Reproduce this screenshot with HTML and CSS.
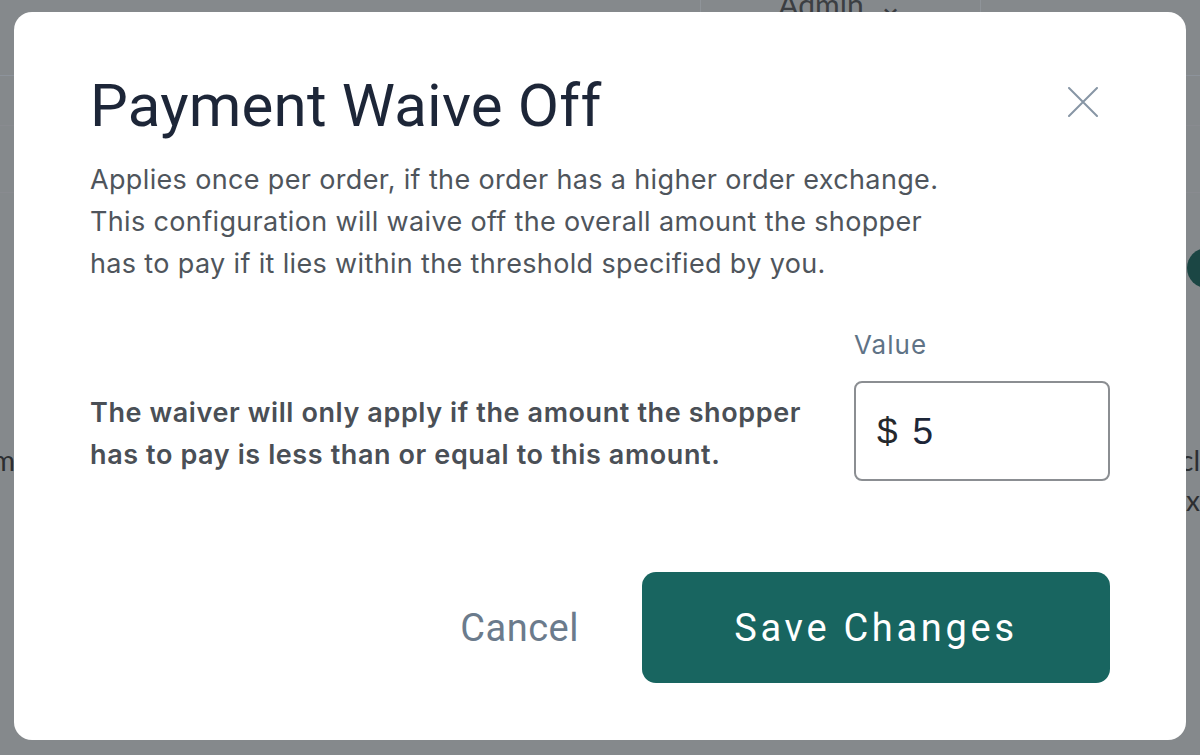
FILE: index.html
```html
<!DOCTYPE html>
<html lang="en">
<head>
<meta charset="utf-8">
<title>Payment Waive Off</title>
<link rel="stylesheet" href="styles.css">
</head>
<body>
<div class="page">
  <header class="topbar">
    <div class="topbar-spacer"></div>
    <div class="admin">Admin <span class="chev">&#8964;</span></div>
    <div class="topbar-end"></div>
  </header>
  <div class="band band-a"></div>
  <div class="band band-b"></div>
  <div class="avatar-row"><span class="avatar"></span></div>
  <div class="text-row">
    <span class="edge-left">Custom</span>
    <span class="edge-right">Excl<br>Tax</span>
  </div>
</div>

<div class="overlay">
  <div class="modal" role="dialog" aria-labelledby="modal-title">
    <div class="modal-head">
      <h1 class="title" id="modal-title">Payment Waive Off</h1>
      <button class="close" type="button" aria-label="Close">
        <svg viewBox="0 0 30 30" aria-hidden="true"><path d="M1 1 L29 29 M29 1 L1 29"/></svg>
      </button>
    </div>
    <p class="desc">Applies once per order, if the order has a higher order exchange.<br>This configuration will waive off the overall amount the shopper<br>has to pay if it lies within the threshold specified by you.</p>
    <div class="row">
      <p class="rule-text">The waiver will only apply if the amount the shopper<br>has to pay is less than or equal to this amount.</p>
      <div class="field">
        <label class="field-label" for="waive-value">Value</label>
        <div class="input"><span class="currency">$</span><span class="amount" id="waive-value">5</span></div>
      </div>
    </div>
    <div class="actions">
      <button class="cancel" type="button">Cancel</button>
      <button class="save" type="button">Save Changes</button>
    </div>
  </div>
</div>
</body>
</html>
```

FILE: styles.css
```css
* { box-sizing: border-box; }
html, body { margin: 0; height: 100%; }
body {
  background: #85898c;
  font-family: Inter, "Liberation Sans", sans-serif;
  overflow: hidden;
}

/* dimmed page behind the dialog */
.page {
  height: 100%;
  display: flex;
  flex-direction: column;
  transform: translateY(-24px);
}
.topbar {
  height: 100px;
  display: flex;
  border-bottom: 1px solid #8d939b;
  flex: none;
}
.topbar-spacer { width: 700px; }
.admin {
  width: 281px;
  border-left: 1px solid #8f9499;
  border-right: 1px solid #8f9499;
  display: flex;
  justify-content: center;
  gap: 14px;
  padding-top: 10px;
  font: 400 30px/36px Lato, sans-serif;
  color: #3b3e42;
}
.band { flex: none; border-bottom: 1px solid #898b90; }
.band-a { height: 50px; }
.band-b { height: 67px; }
.avatar-row {
  flex: none;
  height: 95px;
  display: flex;
  justify-content: flex-end;
  align-items: flex-end;
}
.avatar {
  width: 40px;
  height: 40px;
  border-radius: 50%;
  background: #1b4644;
  margin-right: -27px;
}
.text-row {
  flex: none;
  margin-top: 152px;
  display: flex;
  justify-content: space-between;
  font: 400 28px/40px Lato, sans-serif;
  color: #2c2e31;
}
.edge-left { margin-left: -80px; }
.edge-right { text-align: right; margin-right: 0; }

/* dialog */
.overlay {
  position: fixed;
  inset: 0;
  display: flex;
  justify-content: center;
  align-items: flex-start;
  padding-top: 12px;
}
.modal {
  width: 1172px;
  background: #fff;
  border-radius: 18px;
  padding: 58px 76px 57px;
  display: flex;
  flex-direction: column;
}
.modal-head {
  display: flex;
  justify-content: space-between;
  align-items: flex-start;
}
.title {
  margin: 0;
  font: 400 60px/72px Roboto, sans-serif;
  color: #1d2638;
  letter-spacing: 0.2px;
}
.close {
  width: 54px;
  height: 54px;
  margin-top: 5px;
  padding: 12px;
  border: 0;
  background: none;
}
.close svg { width: 30px; height: 30px; display: block; }
.close path { stroke: #8796a5; stroke-width: 2; fill: none; stroke-linecap: round; }

.desc {
  margin: 17px 0 5px;
  font: 400 27px/42px Inter, sans-serif;
  letter-spacing: 0.35px;
  color: #4f555c;
}
.row {
  margin-top: 39px;
  display: flex;
  justify-content: space-between;
  align-items: flex-end;
}
.rule-text {
  margin: 0 0 5px;
  font: 600 27px/42px Inter, sans-serif;
  letter-spacing: 0.6px;
  color: #4a4f56;
}
.field {
  width: 256px;
  display: flex;
  flex-direction: column;
  gap: 20px;
}
.field-label {
  font: 400 26px/32px Inter, sans-serif;
  letter-spacing: 1px;
  color: #5f7386;
}
.input {
  height: 100px;
  border: 2px solid #8b8e92;
  border-radius: 8px;
  display: flex;
  align-items: center;
  padding-left: 21px;
  font: 400 37px/1 "Liberation Sans", Arial, sans-serif;
  color: #1d2638;
}
.currency { margin-right: 15px; color: #25282c; }

.actions {
  margin-top: 91px;
  display: flex;
  justify-content: flex-end;
  align-items: center;
}
.cancel {
  margin-right: 63px;
  padding: 0;
  border: 0;
  background: none;
  font: 400 38px/46px Roboto, sans-serif;
  letter-spacing: 0.5px;
  color: #6b7b8c;
}
.save {
  width: 468px;
  height: 111px;
  border: 0;
  border-radius: 14px;
  background: #186560;
  color: #fff;
  font: 400 38px/46px Roboto, sans-serif;
  letter-spacing: 3.7px;
}
```
